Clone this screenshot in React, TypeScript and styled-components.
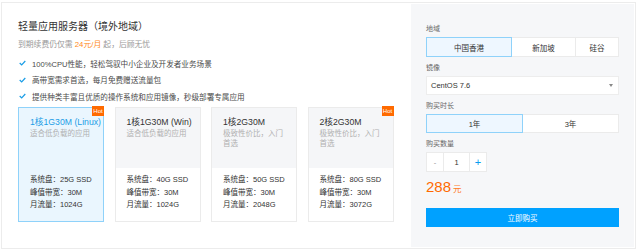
import React from "react";
import styled, { createGlobalStyle } from "styled-components";

const Global = createGlobalStyle`
  html, body { margin: 0; padding: 0; background: #fff; }
  body {
    font-family: "Liberation Sans", "Noto Sans CJK SC", sans-serif;
    color: #333;
  }
  * { box-sizing: border-box; }
`;

const Page = styled.div`
  padding: 2px 0 0 1px;
`;

const Card = styled.div`
  width: 635px;
  height: 247px;
  border: 1px solid #ececec;
  display: flex;
`;

const Main = styled.div`
  flex: 1;
  padding: 17px 0 0 16px;
`;

const Title = styled.h1`
  margin: 0;
  font-size: 10px;
  line-height: 14px;
  font-weight: normal;
  color: #333;
`;

const Sub = styled.p`
  margin: 5px 0 0;
  font-size: 7.8px;
  line-height: 12px;
  color: #999;
`;

const Orange = styled.span`
  color: #ff8a1a;
`;

const Features = styled.ul`
  list-style: none;
  margin: 4px 0 0;
  padding: 0;
`;

const Feature = styled.li`
  display: flex;
  align-items: center;
  gap: 6px;
  height: 16.5px;
  padding-left: 1px;
  font-size: 7.6px;
  color: #4a4a4a;
`;

const Plans = styled.div`
  display: flex;
  gap: 10.5px;
  margin-top: 2px;
`;

const Plan = styled.div<{ $active?: boolean }>`
  position: relative;
  width: 86px;
  height: 115px;
  border: 1px solid ${(p) => (p.$active ? "#8fd2fa" : "#ebebeb")};
  background: ${(p) => (p.$active ? "#eaf6fe" : "#fff")};
  display: flex;
  flex-direction: column;
`;

const PlanTop = styled.div<{ $active?: boolean }>`
  height: 60px;
  padding: 7.5px 11px 0;
  background: ${(p) => (p.$active ? "transparent" : "#f5f6f8")};
`;

const PlanName = styled.div<{ $active?: boolean }>`
  font-size: 8.7px;
  line-height: 14px;
  white-space: nowrap;
  color: ${(p) => (p.$active ? "#1a9de6" : "#333")};
`;

const PlanDesc = styled.div`
  font-size: 7.5px;
  line-height: 10px;
  color: #b0b0b0;
`;

const PlanSpecs = styled.div`
  padding: 6.5px 11px 0;
  font-size: 7.5px;
  line-height: 12.5px;
  color: #333;
`;

const Hot = styled.span`
  position: absolute;
  top: -2px;
  right: -1px;
  width: 12px;
  height: 10px;
  background: #ff6a00;
  color: #fff;
  font-size: 6px;
  line-height: 10px;
  text-align: center;
`;

const Panel = styled.div`
  width: 223px;
  margin: 1px 1px 1px 0;
  background: #f6f7f9;
  padding: 19px 15px 0 15px;
`;

const Field = styled.div`
  margin-bottom: 5px;
`;

const Label = styled.div`
  font-size: 7px;
  line-height: 12px;
  color: #666;
  margin-bottom: 2px;
`;

const Seg = styled.div<{ $h: number }>`
  display: flex;
  height: ${(p) => p.$h}px;
`;

const SegBtn = styled.div<{ $grow: number; $active?: boolean }>`
  flex: ${(p) => p.$grow} 1 0;
  display: flex;
  align-items: center;
  justify-content: center;
  margin-left: -1px;
  &:first-child { margin-left: 0; }
  border: 1px solid ${(p) => (p.$active ? "#8fd2fa" : "#ebebeb")};
  background: ${(p) => (p.$active ? "#eef7ff" : "#fff")};
  position: relative;
  z-index: ${(p) => (p.$active ? 1 : 0)};
  font-size: 7.5px;
  color: #333;
`;

const Select = styled.div`
  height: 19px;
  background: #fff;
  border: 1px solid #ededed;
  display: flex;
  align-items: center;
  justify-content: space-between;
  padding: 0 5px 0 4px;
  font-size: 7.5px;
  color: #333;
`;

const Stepper = styled.div`
  display: flex;
  height: 20px;
`;

const StepBtn = styled.div<{ $w: number; $blue?: boolean }>`
  width: ${(p) => p.$w}px;
  display: flex;
  align-items: center;
  justify-content: center;
  background: #fff;
  border: 1px solid #ebebeb;
  margin-left: -1px;
  &:first-child { margin-left: 0; }
  font-size: ${(p) => (p.$blue ? "11px" : "7.5px")};
  color: ${(p) => (p.$blue ? "#0a9cf0" : "#999")};
`;

const StepValue = styled(StepBtn)`
  color: #333;
  font-size: 7.5px;
`;

const Price = styled.div`
  margin-top: 3px;
  line-height: 20px;
  font-size: 15px;
  color: #ff6a00;
`;

const Yuan = styled.span`
  font-size: 8.5px;
  margin-left: 2px;
  color: #ff7a1f;
`;

const Buy = styled.button`
  display: block;
  width: 100%;
  margin-top: 9px;
  height: 19px;
  border: none;
  background: #00a1ff;
  color: #fff;
  font-family: inherit;
  font-size: 7.5px;
  padding: 0;
`;

const Check = () => (
  <svg width="7" height="6" viewBox="0 0 7 6">
    <polyline points="0.7,3 2.7,5 6.3,1" fill="none" stroke="#1a9de6" strokeWidth="1.2" />
  </svg>
);

const Arrow = () => (
  <svg width="4" height="3" viewBox="0 0 4 3">
    <polygon points="0,0 4,0 2,3" fill="#888" />
  </svg>
);

const plans = [
  { name: "1核1G30M (Linux)", desc: "适合低负载的应用", disk: "25G SSD", bw: "30M", tr: "1024G", hot: true, active: true },
  { name: "1核1G30M (Win)", desc: "适合低负载的应用", disk: "40G SSD", bw: "30M", tr: "1024G" },
  { name: "1核2G30M", desc: "极致性价比，入门首选", disk: "50G SSD", bw: "30M", tr: "2048G" },
  { name: "2核2G30M", desc: "极致性价比，入门首选", disk: "80G SSD", bw: "30M", tr: "3072G", hot: true },
];

export default function App() {
  return (
    <Page>
      <Global />
      <Card>
        <Main>
          <Title>轻量应用服务器（境外地域）</Title>
          <Sub>
            到期续费仍仅需 <Orange>24元/月</Orange> 起，后顾无忧
          </Sub>
          <Features>
            <Feature><Check />100%CPU性能，轻松驾驭中小企业及开发者业务场景</Feature>
            <Feature><Check />高带宽需求首选，每月免费赠送流量包</Feature>
            <Feature><Check />提供种类丰富且优质的操作系统和应用镜像，秒级部署专属应用</Feature>
          </Features>
          <Plans>
            {plans.map((p) => (
              <Plan key={p.name + p.disk} $active={p.active}>
                {p.hot && <Hot>Hot</Hot>}
                <PlanTop $active={p.active}>
                  <PlanName $active={p.active}>{p.name}</PlanName>
                  <PlanDesc>{p.desc}</PlanDesc>
                </PlanTop>
                <PlanSpecs>
                  <div>系统盘：{p.disk}</div>
                  <div>峰值带宽：{p.bw}</div>
                  <div>月流量：{p.tr}</div>
                </PlanSpecs>
              </Plan>
            ))}
          </Plans>
        </Main>
        <Panel>
          <Field>
            <Label>地域</Label>
            <Seg $h={20}>
              <SegBtn $grow={4} $active>中国香港</SegBtn>
              <SegBtn $grow={3}>新加坡</SegBtn>
              <SegBtn $grow={2}>硅谷</SegBtn>
            </Seg>
          </Field>
          <Field>
            <Label>镜像</Label>
            <Select>
              <span>CentOS 7.6</span>
              <Arrow />
            </Select>
          </Field>
          <Field>
            <Label>购买时长</Label>
            <Seg $h={19}>
              <SegBtn $grow={1} $active>1年</SegBtn>
              <SegBtn $grow={1}>3年</SegBtn>
            </Seg>
          </Field>
          <Field>
            <Label>购买数量</Label>
            <Stepper>
              <StepBtn $w={18}>-</StepBtn>
              <StepValue $w={27}>1</StepValue>
              <StepBtn $w={18} $blue>+</StepBtn>
            </Stepper>
          </Field>
          <Price>
            288<Yuan>元</Yuan>
          </Price>
          <Buy>立即购买</Buy>
        </Panel>
      </Card>
    </Page>
  );
}
